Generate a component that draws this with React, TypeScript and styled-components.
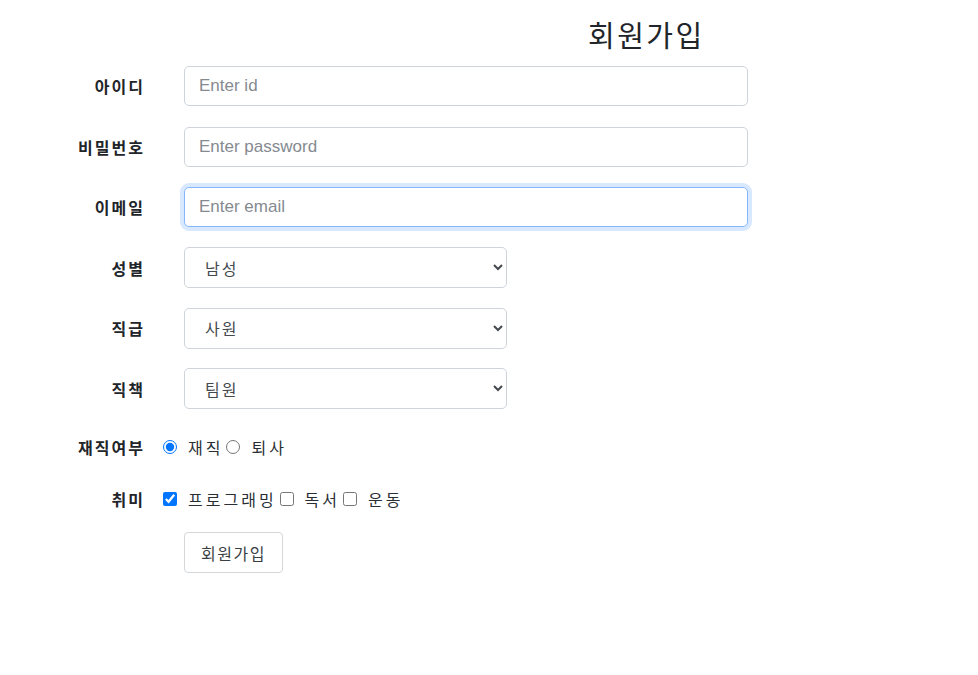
import React from 'react'
import styled, { createGlobalStyle } from 'styled-components'

const GlobalStyle = createGlobalStyle`
  body {
    margin: 0;
    background: #ffffff;
    font-family: "Liberation Sans", "Noto Sans CJK KR", sans-serif;
    color: #212529;
  }
`

const Page = styled.div`
  padding-top: 14px;
`

const Title = styled.h2`
  margin: 0 0 2px 588px;
  font-family: "Noto Sans CJK KR", sans-serif;
  font-size: 29px;
  font-weight: 400;
  line-height: 40px;
  letter-spacing: 2.5px;
  color: #212529;
`

const Form = styled.form`
  display: flex;
  flex-direction: column;
`

const Row = styled.div<{ $height: number }>`
  display: flex;
  align-items: center;
  height: ${p => p.$height}px;
`

const Label = styled.label`
  width: 145px;
  flex-shrink: 0;
  text-align: right;
  font-family: "Noto Sans CJK KR", sans-serif;
  font-size: 16px;
  font-weight: 700;
  color: #212529;
  letter-spacing: 2px;
  margin-right: -2px;
`

const TextInput = styled.input<{ $focused?: boolean }>`
  box-sizing: border-box;
  margin-left: 41px;
  width: 564px;
  height: 40px;
  padding: 0 14px;
  font-family: "Liberation Sans", "Noto Sans CJK KR", sans-serif;
  font-size: 17px;
  color: #212529;
  border: 1px solid ${p => (p.$focused ? '#86b7fe' : '#ced4da')};
  border-radius: 5px;
  box-shadow: ${p => (p.$focused ? '0 0 0 4px rgba(13, 110, 253, 0.16)' : 'none')};
  outline: none;

  &::placeholder {
    color: #858a90;
  }
`

const Select = styled.select`
  box-sizing: border-box;
  margin-left: 41px;
  width: 323px;
  height: 41px;
  padding: 0 16px;
  font-family: "Noto Sans CJK KR", sans-serif;
  font-size: 16px;
  letter-spacing: 2px;
  color: #44494e;
  background: #ffffff;
  border: 1px solid #ced4da;
  border-radius: 5px;
  outline: none;
`

const Choices = styled.div`
  display: flex;
  align-items: center;
  gap: 3px;
  margin-left: 20px;
  font-family: "Noto Sans CJK KR", sans-serif;
  font-size: 16px;
  letter-spacing: 3px;
  color: #2a2f34;
`

const Choice = styled.label`
  display: flex;
  align-items: center;
  gap: 11px;
`

const Radio = styled.input`
  width: 14px;
  height: 14px;
  margin: 0;
  accent-color: #0075ff;
`

const Check = styled.input`
  width: 14px;
  height: 14px;
  margin: 0;
  accent-color: #0075ff;
`

const Submit = styled.button`
  margin-left: 184px;
  margin-top: 9px;
  width: 99px;
  height: 41px;
  font-family: "Noto Sans CJK KR", sans-serif;
  font-size: 16px;
  letter-spacing: 1.5px;
  color: #3a3f44;
  background: #ffffff;
  border: 1px solid #d4d7da;
  border-radius: 4px;
`

export default function App() {
  return (
    <Page>
      <GlobalStyle />
      <Title>회원가입</Title>
      <Form onSubmit={e => e.preventDefault()}>
        <Row $height={60.5}>
          <Label>아이디</Label>
          <TextInput placeholder="Enter id" />
        </Row>
        <Row $height={60.5}>
          <Label>비밀번호</Label>
          <TextInput type="password" placeholder="Enter password" />
        </Row>
        <Row $height={60.5}>
          <Label>이메일</Label>
          <TextInput type="email" placeholder="Enter email" $focused />
        </Row>
        <Row $height={60.5}>
          <Label>성별</Label>
          <Select defaultValue="남성">
            <option>남성</option>
            <option>여성</option>
          </Select>
        </Row>
        <Row $height={60.5}>
          <Label>직급</Label>
          <Select defaultValue="사원">
            <option>사원</option>
            <option>대리</option>
            <option>과장</option>
          </Select>
        </Row>
        <Row $height={60.5}>
          <Label>직책</Label>
          <Select defaultValue="팀원">
            <option>팀원</option>
            <option>팀장</option>
          </Select>
        </Row>
        <Row $height={56}>
          <Label>재직여부</Label>
          <Choices>
            <Choice>
              <Radio type="radio" name="work" defaultChecked />
              재직
            </Choice>
            <Choice>
              <Radio type="radio" name="work" />
              퇴사
            </Choice>
          </Choices>
        </Row>
        <Row $height={48}>
          <Label>취미</Label>
          <Choices>
            <Choice>
              <Check type="checkbox" defaultChecked />
              프로그래밍
            </Choice>
            <Choice>
              <Check type="checkbox" />
              독서
            </Choice>
            <Choice>
              <Check type="checkbox" />
              운동
            </Choice>
          </Choices>
        </Row>
        <div>
          <Submit type="submit">회원가입</Submit>
        </div>
      </Form>
    </Page>
  )
}
